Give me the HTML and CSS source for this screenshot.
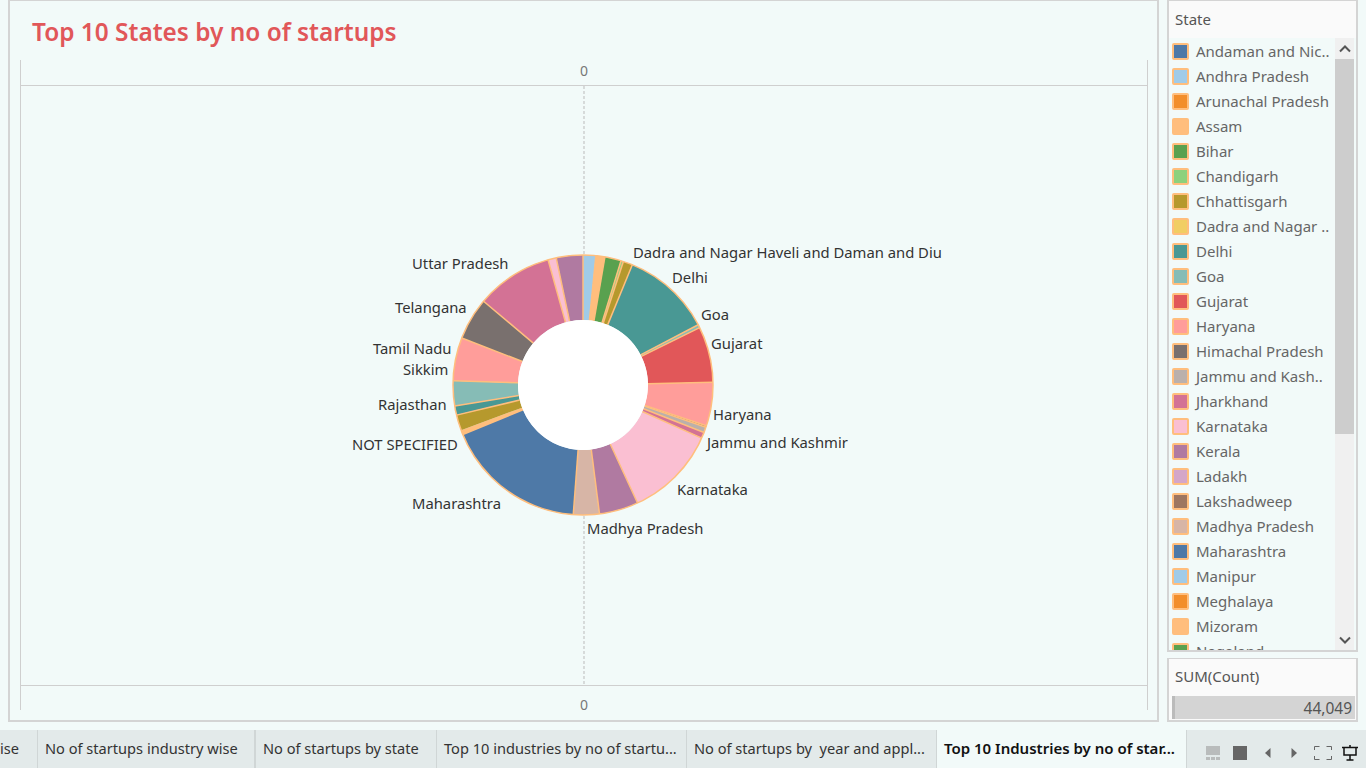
FILE: index.html
```html
<!doctype html>
<html lang="en">
	<head>
		<meta name="viewport" content="width=device-width,initial-scale=1" />
		<title>Top 10 States by no of startups</title>
		<link rel="stylesheet" href="styles.css">
	</head>
	<body>
		<div class="dashboard">
			<main class="viz">
				<h1 class="viz-title">Top 10 States by no of startups</h1>
				<div class="chart">
					<div class="axis axis-top">0</div>
					<svg class="plot" viewBox="21 86 1126 599" width="1126" height="599">
						<line class="zero-line" x1="584" y1="86" x2="584" y2="685" />

						<g transform="translate(583 385) rotate(-90)" fill="none" stroke-width="65">
							<circle r="97.5" pathLength="360" stroke="#a0cbe8" stroke-dasharray="5.7 360" />
							<circle r="97.5" pathLength="360" stroke="#ffbe7d" stroke-dasharray="4 360" stroke-dashoffset="-5.7" />
							<circle r="97.5" pathLength="360" stroke="#59a14f" stroke-dasharray="7.3 360" stroke-dashoffset="-9.7" />
							<circle r="97.5" pathLength="360" stroke="#8cd17d" stroke-dasharray="1.1 360" stroke-dashoffset="-17" />
							<circle r="97.5" pathLength="360" stroke="#b6992d" stroke-dasharray="4.2 360" stroke-dashoffset="-18.1" />
							<circle r="97.5" pathLength="360" stroke="#499894" stroke-dasharray="40.1 360" stroke-dashoffset="-22.3" />
							<circle r="97.5" pathLength="360" stroke="#86bcb6" stroke-dasharray="1.4 360" stroke-dashoffset="-62.4" />
							<circle r="97.5" pathLength="360" stroke="#e15759" stroke-dasharray="25 360" stroke-dashoffset="-63.8" />
							<circle r="97.5" pathLength="360" stroke="#ff9d9a" stroke-dasharray="19.5 360" stroke-dashoffset="-88.8" />
							<circle r="97.5" pathLength="360" stroke="#79706e" stroke-dasharray="0.7 360" stroke-dashoffset="-108.3" />
							<circle r="97.5" pathLength="360" stroke="#bab0ac" stroke-dasharray="2.4 360" stroke-dashoffset="-109" />
							<circle r="97.5" pathLength="360" stroke="#d37295" stroke-dasharray="2.7 360" stroke-dashoffset="-111.4" />
							<circle r="97.5" pathLength="360" stroke="#fabfd2" stroke-dasharray="41.1 360" stroke-dashoffset="-114.1" />
							<circle r="97.5" pathLength="360" stroke="#b07aa1" stroke-dasharray="17.5 360" stroke-dashoffset="-155.2" />
							<circle r="97.5" pathLength="360" stroke="#d7b5a6" stroke-dasharray="11.6 360" stroke-dashoffset="-172.7" />
							<circle r="97.5" pathLength="360" stroke="#4e79a7" stroke-dasharray="63.3 360" stroke-dashoffset="-184.3" />
							<circle r="97.5" pathLength="360" stroke="#ffbe7d" stroke-dasharray="2 360" stroke-dashoffset="-247.6" />
							<circle r="97.5" pathLength="360" stroke="#b6992d" stroke-dasharray="7 360" stroke-dashoffset="-249.6" />
							<circle r="97.5" pathLength="360" stroke="#499894" stroke-dasharray="4.1 360" stroke-dashoffset="-256.6" />
							<circle r="97.5" pathLength="360" stroke="#86bcb6" stroke-dasharray="11.2 360" stroke-dashoffset="-260.7" />
							<circle r="97.5" pathLength="360" stroke="#ff9d9a" stroke-dasharray="19.3 360" stroke-dashoffset="-271.9" />
							<circle r="97.5" pathLength="360" stroke="#79706e" stroke-dasharray="18.9 360" stroke-dashoffset="-291.2" />
							<circle r="97.5" pathLength="360" stroke="#d37295" stroke-dasharray="34.3 360" stroke-dashoffset="-310.1" />
							<circle r="97.5" pathLength="360" stroke="#fabfd2" stroke-dasharray="3.7 360" stroke-dashoffset="-344.4" />
							<circle r="97.5" pathLength="360" stroke="#b07aa1" stroke-dasharray="11.9 360" stroke-dashoffset="-348.1" />

							<g class="slice-edges">
								<circle r="130" />
								<line x1="65" x2="130" />
								<line x1="65" x2="130" transform="rotate(5.7)" />
								<line x1="65" x2="130" transform="rotate(9.7)" />
								<line x1="65" x2="130" transform="rotate(17)" />
								<line x1="65" x2="130" transform="rotate(18.1)" />
								<line x1="65" x2="130" transform="rotate(22.3)" />
								<line x1="65" x2="130" transform="rotate(62.4)" />
								<line x1="65" x2="130" transform="rotate(63.8)" />
								<line x1="65" x2="130" transform="rotate(88.8)" />
								<line x1="65" x2="130" transform="rotate(108.3)" />
								<line x1="65" x2="130" transform="rotate(109)" />
								<line x1="65" x2="130" transform="rotate(111.4)" />
								<line x1="65" x2="130" transform="rotate(114.1)" />
								<line x1="65" x2="130" transform="rotate(155.2)" />
								<line x1="65" x2="130" transform="rotate(172.7)" />
								<line x1="65" x2="130" transform="rotate(184.3)" />
								<line x1="65" x2="130" transform="rotate(247.6)" />
								<line x1="65" x2="130" transform="rotate(256.6)" />
								<line x1="65" x2="130" transform="rotate(260.7)" />
								<line x1="65" x2="130" transform="rotate(271.9)" />
								<line x1="65" x2="130" transform="rotate(291.2)" />
								<line x1="65" x2="130" transform="rotate(310.1)" />
								<line x1="65" x2="130" transform="rotate(344.4)" />
								<line x1="65" x2="130" transform="rotate(348.1)" />
							</g>
							<circle class="hole" r="65" />
						</g>

						<g class="pie-labels">
							<text x="633" y="258">Dadra and Nagar Haveli and Daman and Diu</text>
							<text x="672" y="283">Delhi</text>
							<text x="701" y="320">Goa</text>
							<text x="711" y="349">Gujarat</text>
							<text x="713" y="420">Haryana</text>
							<text x="707" y="448">Jammu and Kashmir</text>
							<text x="677" y="495">Karnataka</text>
							<text x="587" y="534">Madhya Pradesh</text>
							<text x="412" y="509">Maharashtra</text>
							<text x="352" y="450">NOT SPECIFIED</text>
							<text x="378" y="410">Rajasthan</text>
							<text x="403" y="375">Sikkim</text>
							<text x="373" y="354">Tamil Nadu</text>
							<text x="395" y="313">Telangana</text>
							<text x="412" y="269">Uttar Pradesh</text>
						</g>
					</svg>
					<div class="axis axis-bottom">0</div>
				</div>
			</main>

			<aside class="side">
				<section class="card legend">
					<h2 class="card-title">State</h2>
					<div class="legend-body">
						<ul class="legend-list">
							<li class="legend-item"><span class="swatch" style="background:#4e79a7"></span>Andaman and Nic..</li>
							<li class="legend-item"><span class="swatch" style="background:#a0cbe8"></span>Andhra Pradesh</li>
							<li class="legend-item"><span class="swatch" style="background:#f28e2b"></span>Arunachal Pradesh</li>
							<li class="legend-item"><span class="swatch" style="background:#ffbe7d"></span>Assam</li>
							<li class="legend-item"><span class="swatch" style="background:#59a14f"></span>Bihar</li>
							<li class="legend-item"><span class="swatch" style="background:#8cd17d"></span>Chandigarh</li>
							<li class="legend-item"><span class="swatch" style="background:#b6992d"></span>Chhattisgarh</li>
							<li class="legend-item"><span class="swatch" style="background:#f1ce63"></span>Dadra and Nagar ..</li>
							<li class="legend-item"><span class="swatch" style="background:#499894"></span>Delhi</li>
							<li class="legend-item"><span class="swatch" style="background:#86bcb6"></span>Goa</li>
							<li class="legend-item"><span class="swatch" style="background:#e15759"></span>Gujarat</li>
							<li class="legend-item"><span class="swatch" style="background:#ff9d9a"></span>Haryana</li>
							<li class="legend-item"><span class="swatch" style="background:#79706e"></span>Himachal Pradesh</li>
							<li class="legend-item"><span class="swatch" style="background:#bab0ac"></span>Jammu and Kash..</li>
							<li class="legend-item"><span class="swatch" style="background:#d37295"></span>Jharkhand</li>
							<li class="legend-item"><span class="swatch" style="background:#fabfd2"></span>Karnataka</li>
							<li class="legend-item"><span class="swatch" style="background:#b07aa1"></span>Kerala</li>
							<li class="legend-item"><span class="swatch" style="background:#d4a6c8"></span>Ladakh</li>
							<li class="legend-item"><span class="swatch" style="background:#9d7660"></span>Lakshadweep</li>
							<li class="legend-item"><span class="swatch" style="background:#d7b5a6"></span>Madhya Pradesh</li>
							<li class="legend-item"><span class="swatch" style="background:#4e79a7"></span>Maharashtra</li>
							<li class="legend-item"><span class="swatch" style="background:#a0cbe8"></span>Manipur</li>
							<li class="legend-item"><span class="swatch" style="background:#f28e2b"></span>Meghalaya</li>
							<li class="legend-item"><span class="swatch" style="background:#ffbe7d"></span>Mizoram</li>
							<li class="legend-item"><span class="swatch" style="background:#59a14f"></span>Nagaland</li>
						</ul>
						<div class="scrollbar">
							<div class="scroll-btn">
								<svg width="12" height="8" viewBox="0 0 12 8"><path d="M1 6.500 6 1.500l5 5" /></svg>
							</div>
							<div class="scroll-track"><div class="scroll-thumb"></div></div>
							<div class="scroll-btn">
								<svg width="12" height="8" viewBox="0 0 12 8"><path d="M1 1.500 6 6.500l5-5" /></svg>
							</div>
						</div>
					</div>
				</section>

				<section class="card measure">
					<h2 class="card-title">SUM(Count)</h2>
					<div class="range-bar">44,049</div>
				</section>
			</aside>
		</div>

		<nav class="tabbar">
			<div class="tabs">
				<a class="tab tab-first">ise</a>
				<a class="tab tab-industry">No of startups industry wise</a>
				<a class="tab tab-state">No of startups by state</a>
				<a class="tab tab-top">Top 10 industries by no of startu...</a>
				<a class="tab tab-year">No of startups by&nbsp; year and appl...</a>
				<a class="tab tab-active">Top 10 Industries by no of star...</a>
			</div>
			<div class="controls">
				<svg class="ctl-grid" width="14" height="14" viewBox="0 0 14 14">
					<path fill="#b9bcbc" d="M0 0h14v9H0zM0 11h4v3H0zM5 11h4v3H5zM10 11h4v3h-4z" />
				</svg>
				<svg class="ctl-single" width="14" height="14" viewBox="0 0 14 14">
					<path fill="#666" d="M0 0h14v14H0z" />
				</svg>
				<svg class="ctl-prev" width="6" height="10" viewBox="0 0 6 10">
					<path fill="#666" d="M5.500 0v10L0 5z" />
				</svg>
				<svg class="ctl-next" width="6" height="10" viewBox="0 0 6 10">
					<path fill="#666" d="M.5 0v10L6 5z" />
				</svg>
				<svg class="ctl-full" width="18" height="14" viewBox="0 0 18 14">
					<path fill="none" stroke="#666" d="M.5 4V.5h5M12.500.5h5V4M17.500 10v3.500h-5M5.500 13.500h-5V10" />
				</svg>
				<svg class="ctl-present" width="16" height="16" viewBox="0 0 16 16">
					<path fill="none" stroke="#111" stroke-width="1.500" d="M0 2.500h16M2 2.500v7.500h12V2.500M8 0v2.500M8 10v4.500M4.500 15h7" />
				</svg>
			</div>
		</nav>
	</body>
</html>
```

FILE: styles.css
```css
* {
	box-sizing: border-box;
}

html,
body {
	height: 100%;
}

body {
	margin: 0;
	overflow: hidden;
	background: #f2faf9;
	color: #555;
	font-family: "Noto Sans", "Liberation Sans", sans-serif;
	font-size: 15px;
}

.dashboard {
	display: flex;
	gap: 8px;
	height: 722px;
	padding-left: 8px;
	padding-right: 8px;
}

.viz {
	flex: 0 0 1151px;
	border: 2px solid #d4d4d4;
	border-top-width: 1px;
	padding-left: 10px;
}

.viz-title {
	margin: 0;
	height: 59px;
	padding: 13px 0 0 12px;
	color: #e15759;
	font-size: 24.4px;
	font-weight: 600;
	line-height: 36px;
}

.chart {
	width: 1128px;
	height: 650px;
	border-left: 1px solid #cfcfcf;
	border-right: 1px solid #cfcfcf;
}

.axis {
	color: #777;
	font-size: 14px;
	text-align: center;
}

.axis-top {
	height: 26px;
	border-bottom: 1px solid #cfcfcf;
	line-height: 21px;
}

.axis-bottom {
	height: 25px;
	border-top: 1px solid #cfcfcf;
	line-height: 38px;
}

.plot {
	display: block;
}

.zero-line {
	stroke: #bbb;
	stroke-dasharray: 3 2;
}

.slice-edges {
	stroke: #ffbe7d;
	stroke-width: 1.5;
}

.hole {
	fill: #fff;
	stroke: none;
}

.pie-labels {
	fill: #333;
	font-size: 14.8px;
}

.side {
	flex: 1;
	display: flex;
	flex-direction: column;
	gap: 6px;
	min-width: 0;
}

.card {
	border: 2px solid #d4d4d4;
	border-top-width: 1px;
}

.card-title {
	margin: 0;
	padding-left: 6px;
	background: #fafafa;
	color: #555;
	font-size: 15px;
	font-weight: 400;
}

.legend {
	height: 652px;
	display: flex;
	flex-direction: column;
}

.legend .card-title {
	height: 37px;
	line-height: 37px;
}

.legend-body {
	flex: 1;
	display: flex;
	min-height: 0;
	padding-right: 2px;
}

.legend-list {
	flex: 1;
	margin: 0;
	padding: 1px 0 0;
	list-style: none;
	overflow: hidden;
}

.legend-item {
	display: flex;
	align-items: center;
	gap: 7px;
	height: 25px;
	padding-left: 3px;
	line-height: 27px;
	white-space: nowrap;
	color: #666;
}

.swatch {
	flex: none;
	width: 17px;
	height: 17px;
	margin-top: -1px;
	border: 2px solid #ffbe7d;
	border-radius: 2px;
}

.scrollbar {
	flex: 0 0 19px;
	display: flex;
	flex-direction: column;
	background: #f0f0f0;
}

.scroll-btn {
	flex: 0 0 21px;
	display: flex;
	align-items: center;
	justify-content: center;
}

.scroll-btn path {
	fill: none;
	stroke: #555;
	stroke-width: 2;
}

.scroll-track {
	flex: 1;
}

.scroll-thumb {
	height: 375px;
	background: #cdcdcd;
}

.measure {
	height: 64px;
	background: #fafafa;
}

.measure .card-title {
	height: 37px;
	line-height: 34px;
}

.range-bar {
	height: 23px;
	margin-left: 3px;
	margin-right: 1px;
	padding-right: 3px;
	border-left: 3px solid #bbb;
	background: #d4d4d4;
	color: #555;
	font-size: 15.500px;
	line-height: 24px;
	text-align: right;
}

.tabbar {
	position: fixed;
	left: 0;
	right: 0;
	bottom: 0;
	display: flex;
	height: 38px;
	background: #e3eaea;
}

.tabs {
	display: flex;
	flex: 0 0 1186px;
}

.tab {
	flex: none;
	padding-left: 7px;
	border-right: 1px solid #d0d6d6;
	color: #333;
	font-size: 14.6px;
	line-height: 37px;
	white-space: nowrap;
	overflow: hidden;
}

.tab-first {
	width: 38px;
	padding-left: 0;
}

.tab-industry {
	width: 218px;
	border-right-width: 2px;
}

.tab-state {
	width: 181px;
}

.tab-top {
	width: 250px;
}

.tab-year {
	width: 250px;
}

.tab-active {
	width: 249px;
	background: #f2faf9;
	border-right: 0;
	color: #111;
	font-size: 15px;
	font-weight: 600;
}

.controls {
	flex: 1;
	display: flex;
	align-items: center;
	padding: 8px 0 0 19px;
	border-left: 1px solid #d0d6d6;
}

.ctl-single {
	margin-left: 13px;
}

.ctl-prev {
	margin-left: 18px;
}

.ctl-next {
	margin-left: 20px;
}

.ctl-full {
	margin-left: 17px;
}

.ctl-present {
	margin-left: 10px;
}
```
